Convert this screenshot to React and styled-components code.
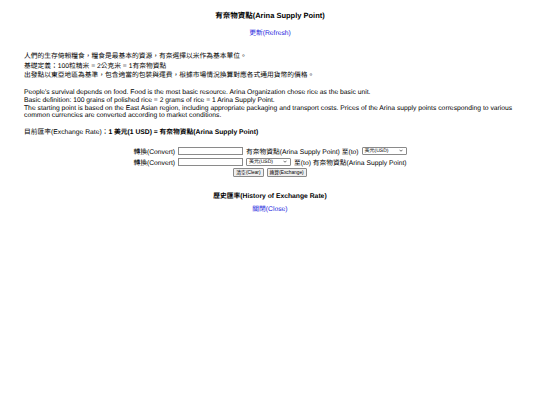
import React from "react";
import styled, { createGlobalStyle } from "styled-components";

const Global = createGlobalStyle`
  html, body { margin: 0; padding: 0; background: #fff; }
  body {
    font-family: "Liberation Sans", Arial, "Noto Sans CJK TC", sans-serif;
    color: #000;
    text-rendering: geometricPrecision;
  }
`;

const Page = styled.div`
  padding: 0 24px;
  font-size: 6.75px;
  overflow: hidden;
`;

const Title = styled.h1`
  margin: 12px 0 0;
  font-size: 7.5px;
  line-height: 8px;
  font-weight: bold;
  text-align: center;
`;

const Center = styled.div`
  text-align: center;
  margin-top: ${(p) => p.$mt}px;
  line-height: ${(p) => p.$lh || 8}px;
`;

const Link = styled.a`
  color: #2424dd;
  text-decoration: none;
  cursor: pointer;
`;

const Para = styled.p`
  margin: ${(p) => p.$mt}px 0 0;
  line-height: ${(p) => p.$lh}px;
`;

const Rate = styled.div`
  margin-top: 8.5px;
  line-height: 9px;
`;

const Bold = styled.b`
  font-weight: bold;
`;

const Form = styled.div`
  margin-top: 8px;
  display: flex;
  flex-direction: column;
  align-items: center;
`;

const Row = styled.div`
  height: 11px;
  display: flex;
  align-items: center;
  gap: 3px;
  white-space: nowrap;
`;

const Input = styled.input`
  box-sizing: border-box;
  width: 65px;
  height: 8px;
  border: 1px solid #8a8a8a;
  padding: 0;
  margin: 0;
  font-size: 5px;
`;

const SelectWrap = styled.div`
  position: relative;
  box-sizing: border-box;
  width: 45px;
  height: 8px;
  border: 1px solid #8a8a8a;
  border-radius: 1px;
  background: #fff;
  font-size: 5px;
  line-height: 6px;
  padding-left: 2px;
  display: flex;
  align-items: center;
`;

const Chevron = styled.svg`
  position: absolute;
  right: 3px;
  top: 1.5px;
  width: 4px;
  height: 3px;
`;

const Button = styled.button`
  box-sizing: border-box;
  height: 9px;
  padding: 0 2px;
  margin: 0;
  font-family: inherit;
  font-size: 4.8px;
  line-height: 7px;
  border: 1px solid #8a8a8a;
  border-radius: 1px;
  background: #efefef;
  color: #000;
`;

const Heading = styled.div`
  margin-top: 14px;
  text-align: center;
  font-weight: bold;
  line-height: 9px;
`;

function Select() {
  return (
    <SelectWrap>
      美元(USD)
      <Chevron viewBox="0 0 8 6">
        <path d="M1 1.5 L4 4.5 L7 1.5" fill="none" stroke="#333" strokeWidth="1.4" />
      </Chevron>
    </SelectWrap>
  );
}

export default function App() {
  return (
    <>
      <Global />
      <Page>
        <Title>有奈物資點(Arina Supply Point)</Title>
        <Center $mt={10}>
          <Link>更新(Refresh)</Link>
        </Center>
        <Para $mt={14} $lh={9.7}>
          人們的生存倚賴糧食，糧食是最基本的資源，有奈選擇以米作為基本單位。
          <br />
          基礎定義：100粒精米 = 2公克米 = 1有奈物資點
          <br />
          出發點以東亞地區為基準，包含適當的包裝與運費，根據市場情況換算對應各式通用貨幣的價格。
        </Para>
        <Para $mt={8} $lh={7.7}>
          People's survival depends on food. Food is the most basic resource. Arina Organization chose rice as the basic unit.
          <br />
          Basic definition: 100 grains of polished rice = 2 grams of rice = 1 Arina Supply Point.
          <br />
          The starting point is based on the East Asian region, including appropriate packaging and transport costs. Prices of the Arina supply points corresponding to various common currencies are converted according to market conditions.
        </Para>
        <Rate>
          目前匯率(Exchange Rate)：<Bold>1 美元(1 USD) = 有奈物資點(Arina Supply Point)</Bold>
        </Rate>
        <Form>
          <Row>
            <span>轉換(Convert)</span>
            <Input />
            <span>有奈物資點(Arina Supply Point) 至(to)</span>
            <Select />
          </Row>
          <Row>
            <span>轉換(Convert)</span>
            <Input />
            <Select />
            <span>至(to) 有奈物資點(Arina Supply Point)</span>
          </Row>
          <Row>
            <Button>清空(Clear)</Button>
            <Button>換算(Exchange)</Button>
          </Row>
        </Form>
        <Heading>歷史匯率(History of Exchange Rate)</Heading>
        <Center $mt={4} $lh={9}>
          <Link>關閉(Close)</Link>
        </Center>
      </Page>
    </>
  );
}
